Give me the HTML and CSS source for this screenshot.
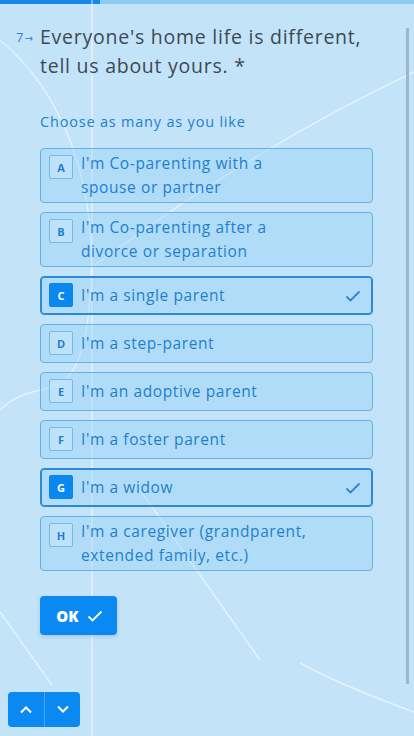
FILE: index.html
```html
<!DOCTYPE html>
<html lang="en">
<head>
<meta charset="utf-8">
<title>Question 7</title>
<link rel="stylesheet" href="styles.css">
</head>
<body>
<div class="progress"><div class="progress-fill"></div></div>
<svg class="deco" viewBox="0 0 414 736" preserveAspectRatio="none" aria-hidden="true">
  <path d="M92 0 V736" />
  <path d="M0 40 C 60 90, 100 180, 90 300 S 40 370, 0 410" />
  <path d="M414 72 Q 250 150, 95 265" />
  <path d="M140 490 L 260 660" />
  <path d="M0 612 L 52 685" />
  <path d="M300 663 Q 340 685, 414 712" />
</svg>
<div class="scrollbar"></div>
<main class="content">
  <div class="question">
    <div class="qnum">7<span class="arrow">→</span></div>
    <h1 class="qtext">Everyone's home life is different, tell us about yours. *</h1>
  </div>
  <p class="hint">Choose as many as you like</p>
  <div class="options">
    <div class="option"><span class="key">A</span><span class="label">I'm Co-parenting with a spouse or partner</span></div>
    <div class="option"><span class="key">B</span><span class="label">I'm Co-parenting after a divorce or separation</span></div>
    <div class="option selected"><span class="key">C</span><span class="label">I'm a single parent</span>
      <svg class="check" viewBox="0 0 16 12"><path d="M1.5 6.5 L5.5 10.5 L14.5 1.5"/></svg></div>
    <div class="option"><span class="key">D</span><span class="label">I'm a step-parent</span></div>
    <div class="option"><span class="key">E</span><span class="label">I'm an adoptive parent</span></div>
    <div class="option"><span class="key">F</span><span class="label">I'm a foster parent</span></div>
    <div class="option selected"><span class="key">G</span><span class="label">I'm a widow</span>
      <svg class="check" viewBox="0 0 16 12"><path d="M1.5 6.5 L5.5 10.5 L14.5 1.5"/></svg></div>
    <div class="option"><span class="key">H</span><span class="label">I'm a caregiver (grandparent, extended family, etc.)</span></div>
  </div>
  <button class="ok">OK <svg class="ok-check" viewBox="0 0 16 12"><path d="M1.5 6.5 L5.5 10.5 L14.5 1.5"/></svg></button>
</main>
<nav class="nav">
  <button class="nav-btn"><svg viewBox="0 0 14 9"><path d="M2 7.5 L7 2.5 L12 7.5"/></svg></button>
  <button class="nav-btn"><svg viewBox="0 0 14 9"><path d="M2 1.5 L7 6.5 L12 1.5"/></svg></button>
</nav>
</body>
</html>
```
FILE: styles.css
```css
* { box-sizing: border-box; }
html, body { margin: 0; padding: 0; }
body {
  width: 414px;
  height: 736px;
  overflow: hidden;
  background: #c3e3f8;
  font-family: "Open Sans", "DejaVu Sans", sans-serif;
  position: relative;
}
.progress {
  height: 4px;
  background: #8ecbf3;
}
.progress-fill {
  width: 100px;
  height: 4px;
  background: #1589e8;
}
.deco {
  position: absolute;
  left: 0; top: 0;
  width: 414px; height: 736px;
  pointer-events: none;
}
.deco path {
  fill: none;
  stroke: rgba(255,255,255,0.55);
  stroke-width: 1.5;
}
.scrollbar {
  position: absolute;
  left: 406px;
  top: 28px;
  width: 3px;
  height: 656px;
  background: #9cb6ca;
}
.content {
  position: relative;
  padding: 18px 0 0 16px;
}
.question {
  display: flex;
}
.qnum {
  width: 24px;
  font-size: 13px;
  color: #2a86d6;
  line-height: 29px;
  padding-top: 1px;
}
.arrow { font-size: 10px; margin-left: 1px; }
.qtext {
  margin: 0;
  width: 330px;
  font-size: 19.5px;
  font-weight: 400;
  line-height: 29px;
  color: #3d4955;
  letter-spacing: 0.75px;
}
.hint {
  margin: 32px 0 0 24px;
  font-size: 14.5px;
  line-height: 20px;
  color: #1f7fcf;
  letter-spacing: 0.8px;
}
.options {
  margin: 16px 0 0 24px;
  width: 333px;
  display: flex;
  flex-direction: column;
  gap: 9px;
}
.option {
  position: relative;
  display: flex;
  align-items: center;
  gap: 8px;
  min-height: 39px;
  padding: 3px 8px;
  border: 1px solid #62b1e8;
  border-radius: 4px;
  background: rgba(140, 205, 250, 0.35);
  color: #1f7fcf;
}
.option.selected {
  box-shadow: inset 0 0 0 1px #2f8ad6;
  border-color: #2f8ad6;
}
.key {
  align-self: flex-start;
  margin-top: 3px;
  flex: none;
  width: 24px;
  height: 24px;
  display: flex;
  align-items: center;
  justify-content: center;
  font-size: 11px;
  font-weight: 700;
  border: 1px solid #73b9ea;
  border-radius: 2px;
  background: rgba(200, 230, 252, 0.6);
  color: #1f7fcf;
}
.selected .key {
  background: #0b87f2;
  border-color: #0b87f2;
  color: #fff;
}
.label {
  font-size: 15.5px;
  line-height: 23.5px;
  width: 236px;
  letter-spacing: 0.6px;
}
.check {
  position: absolute;
  right: 11px;
  top: 50%;
  margin-top: -6px;
  width: 16px;
  height: 12px;
  fill: none;
  stroke: #2a86d6;
  stroke-width: 1.8;
}
.ok {
  margin: 25px 0 0 24px;
  width: 77px;
  height: 39px;
  display: flex;
  align-items: center;
  justify-content: center;
  gap: 8px;
  border: none;
  border-radius: 4px;
  background: #0b89f2;
  color: #fff;
  font-family: "Open Sans", sans-serif;
  font-size: 15px;
  font-weight: 800;
  box-shadow: 0 2px 4px rgba(0,60,120,0.15);
  padding: 0 0 0 2px;
}
.ok-check {
  width: 16px;
  height: 12px;
  fill: none;
  stroke: #fff;
  stroke-width: 1.8;
}
.nav {
  position: absolute;
  left: 8px;
  top: 692px;
  display: flex;
  border-radius: 4px;
  overflow: hidden;
}
.nav-btn {
  width: 36px;
  height: 35px;
  border: none;
  background: #0b89f2;
  display: flex;
  align-items: center;
  justify-content: center;
  padding: 0;
}
.nav-btn + .nav-btn { border-left: 1px solid #4aa6ee; }
.nav-btn svg {
  width: 14px;
  height: 9px;
  fill: none;
  stroke: #fff;
  stroke-width: 2;
}
```
